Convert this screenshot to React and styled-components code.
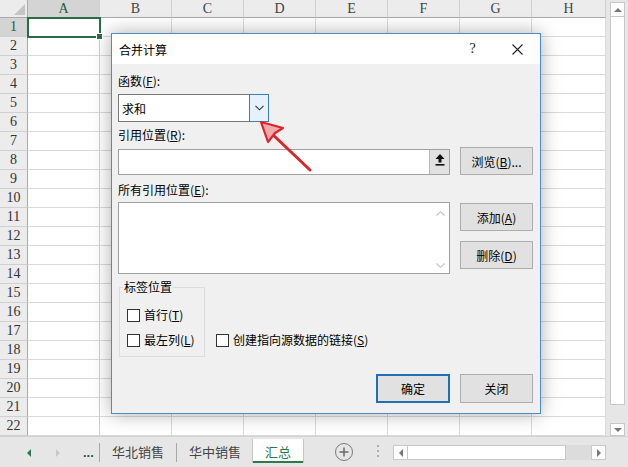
import React from 'react';
import styled, { createGlobalStyle, css } from 'styled-components';

const Global = createGlobalStyle`
  html, body { margin: 0; padding: 0; }
  body {
    width: 628px; height: 467px; overflow: hidden; background: #e6e6e6;
    font-family: "Noto Sans CJK SC", "Noto Sans", sans-serif;
  }
`;

const Screen = styled.div`
  position: relative;
  width: 628px;
  height: 467px;
  display: flex;
  flex-direction: column;
  background: #e6e6e6;
  overflow: hidden;
`;

const Workspace = styled.div`
  display: flex;
  height: 436px;
`;

const Sheet = styled.div`
  display: grid;
  grid-template-columns: 28px repeat(7, 72px) 74px;
  grid-template-rows: 18px repeat(22, 19px);
  width: 606px;
  background: #fff;
  border-right: 1px solid #b5b5b5;
  box-sizing: border-box;
  font-family: "Liberation Serif", "DejaVu Serif", serif;
`;

const Corner = styled.div`
  position: relative;
  background: #ececec;
  border-right: 1px solid #ababab;
  border-bottom: 1px solid #ababab;
  box-sizing: border-box;
  &::after {
    content: "";
    position: absolute;
    right: 2px;
    bottom: 2px;
    border-left: 11px solid transparent;
    border-bottom: 11px solid #c4c4c4;
  }
`;

const ColHead = styled.div`
  display: flex;
  align-items: center;
  justify-content: center;
  background: ${p => (p.$active ? '#d4d4d4' : '#ececec')};
  color: ${p => (p.$active ? '#1f5d36' : '#444')};
  border-right: 1px solid #d0d0d0;
  border-bottom: 1px solid #ababab;
  box-sizing: border-box;
  font-size: 14px;
  line-height: 1;
  padding-top: 1px;
`;

const RowHead = styled.div`
  display: flex;
  align-items: center;
  justify-content: center;
  background: ${p => (p.$active ? '#d4d4d4' : '#ececec')};
  color: ${p => (p.$active ? '#1f5d36' : '#333')};
  border-right: 1px solid #ababab;
  border-bottom: 1px solid #d0d0d0;
  box-sizing: border-box;
  font-size: 14px;
  line-height: 1;
`;

const Cell = styled.div`
  position: relative;
  border-right: 1px solid ${p => (p.$pageBreak ? '#e3c3dc' : '#dadada')};
  border-bottom: 1px solid #dadada;
  box-sizing: border-box;
  ${p =>
    p.$selected &&
    css`
      z-index: 1;
      outline: 2px solid #2a6a44;
      outline-offset: -1px;
      &::after {
        content: "";
        position: absolute;
        right: -4px;
        bottom: -4px;
        width: 5px;
        height: 5px;
        background: #2a6a44;
        border: 1px solid #fff;
      }
    `}
`;

const VScroll = styled.div`
  display: flex;
  flex-direction: column;
  width: 22px;
  padding: 2px 4px 0 4px;
  box-sizing: border-box;
`;

const ArrowBox = styled.div`
  width: 15px;
  height: ${p => p.$h || 15}px;
  box-sizing: border-box;
  border: 1px solid #c8c8c8;
  background: #fdfdfd;
  display: flex;
  align-items: center;
  justify-content: center;
  flex-shrink: 0;
  &::before {
    content: "";
    width: 0;
    height: 0;
    ${p =>
      p.$dir === 'up' &&
      css`
        border-left: 4px solid transparent;
        border-right: 4px solid transparent;
        border-bottom: 4px solid #777;
      `}
    ${p =>
      p.$dir === 'down' &&
      css`
        border-left: 4px solid transparent;
        border-right: 4px solid transparent;
        border-top: 4px solid #777;
      `}
    ${p =>
      p.$dir === 'left' &&
      css`
        border-top: 4px solid transparent;
        border-bottom: 4px solid transparent;
        border-right: 4px solid #777;
      `}
    ${p =>
      p.$dir === 'right' &&
      css`
        border-top: 4px solid transparent;
        border-bottom: 4px solid transparent;
        border-left: 4px solid #777;
      `}
  }
`;

const VThumb = styled.div`
  width: 15px;
  height: 388px;
  box-sizing: border-box;
  background: #fff;
  border: 1px solid #c8c8c8;
  border-top: none;
`;

const VTrack = styled.div`
  flex: 1;
`;

const TabBar = styled.div`
  display: flex;
  align-items: flex-start;
  height: 31px;
  background: #e6e6e6;
  border-top: 1px solid #d2d2d2;
  box-sizing: border-box;
  padding-left: 27px;
  font-size: 13px;
`;

const NavArrow = styled.div`
  width: 0;
  height: 0;
  margin-top: 12px;
  margin-right: ${p => p.$gap}px;
  border-top: 4px solid transparent;
  border-bottom: 4px solid transparent;
  ${p =>
    p.$dir === 'left'
      ? css`border-right: 4px solid #2f7a4d;`
      : css`border-left: 4px solid #c9c9c9;`}
`;

const Ellipsis = styled.div`
  margin-top: 3px;
  height: 24px;
  display: flex;
  align-items: center;
  width: 16px;
  padding-left: 2px;
  color: #2a5a3e;
  font-weight: bold;
  font-size: 13px;
  font-family: "Liberation Sans", sans-serif;
`;

const TabSep = styled.div`
  width: 1px;
  height: 19px;
  margin-top: 6px;
  background: #a8a8a8;
`;

const SheetTab = styled.div`
  height: 24px;
  margin-top: 2px;
  padding: 0 12px;
  display: flex;
  align-items: center;
  color: ${p => (p.$active ? '#2f7a4d' : '#444')};
  box-sizing: border-box;
  ${p =>
    p.$active &&
    css`
      background: #fff;
      border-bottom: 2px solid #2f7a4d;
      box-shadow: 1px 0 0 #c8c8c8, -1px 0 0 #c8c8c8;
      padding-top: 2px;
    `}
`;

const AddSheet = styled.div`
  width: 16px;
  height: 16px;
  margin: 6px 0 0 32px;
  border: 1.5px solid #7a7a7a;
  border-radius: 50%;
  display: flex;
  align-items: center;
  justify-content: center;
`;

const SplitDots = styled.div`
  margin: 8px 0 0 24px;
  display: flex;
  flex-direction: column;
  gap: 3px;
  & > i {
    width: 2px;
    height: 2px;
    background: #b0b0b0;
    display: block;
  }
`;

const HScroll = styled.div`
  display: flex;
  margin: 8px 0 0 14px;
  width: 213px;
  height: 15px;
`;

const HThumb = styled.div`
  width: 158px;
  height: 15px;
  box-sizing: border-box;
  background: #fff;
  border: 1px solid #c8c8c8;
  border-left: none;
`;

const HTrack = styled.div`
  flex: 1;
  background: #dcdcdc;
`;

/* ---------------- Dialog ---------------- */

const Dialog = styled.div`
  position: absolute;
  left: 111px;
  top: 33px;
  width: 430px;
  height: 381px;
  box-sizing: border-box;
  background: #f0f0f0;
  border: 1px solid #4a8cc6;
  box-shadow: 0 0 18px rgba(0, 0, 0, 0.32);
  display: flex;
  flex-direction: column;
  font-size: 12px;
  color: #000;
`;

const TitleBar = styled.div`
  height: 30px;
  background: #fff;
  display: flex;
  align-items: center;
  padding-left: 7px;
  flex-shrink: 0;
`;

const TitleText = styled.div`
  flex: 1;
  font-size: 12px;
`;

const TitleButton = styled.div`
  width: 45px;
  height: 30px;
  display: flex;
  align-items: center;
  justify-content: center;
  font-size: 14px;
  color: #222;
  font-family: "Liberation Serif", serif;
`;

const Body = styled.div`
  flex: 1;
  padding: 9px 7px 0 6px;
  display: flex;
  flex-direction: column;
`;

const Label = styled.div`
  line-height: 16px;
  margin-top: ${p => p.$mt || 0}px;
  white-space: nowrap;
`;

const Combo = styled.div`
  margin-top: 5px;
  width: 151px;
  height: 28px;
  box-sizing: border-box;
  border: 1px solid #7a7a7a;
  background: #fff;
  display: flex;
`;

const ComboText = styled.div`
  flex: 1;
  padding-left: 3px;
  display: flex;
  align-items: center;
`;

const ComboButton = styled.div`
  width: 18px;
  margin: -1px -1px -1px 0;
  border: 1px solid #3c7fb1;
  background: #e5f1fb;
  display: flex;
  align-items: center;
  justify-content: center;
`;

const Row = styled.div`
  display: flex;
  gap: 10px;
  align-items: flex-start;
  margin-top: ${p => p.$mt || 0}px;
`;

const RefInput = styled.div`
  width: 332px;
  height: 26px;
  margin-top: 2px;
  box-sizing: border-box;
  border: 1px solid #a0a0a0;
  background: #fff;
  display: flex;
  justify-content: flex-end;
`;

const CollapseButton = styled.div`
  width: 20px;
  background: #e1e1e1;
  border-left: 1px solid #b9b9b9;
  display: flex;
  justify-content: center;
  padding-top: 4px;
  box-sizing: border-box;
`;

const Button = styled.div`
  width: ${p => p.$w || 73}px;
  height: ${p => p.$h || 28}px;
  box-sizing: border-box;
  border: ${p => (p.$default ? '2px solid #1f6fb2' : '1px solid #adadad')};
  background: #e1e1e1;
  display: flex;
  align-items: center;
  justify-content: center;
  margin-top: ${p => p.$mt || 0}px;
  white-space: nowrap;
`;

const ListBox = styled.div`
  width: 332px;
  height: 72px;
  box-sizing: border-box;
  border: 1px solid #a0a0a0;
  background: #fff;
  display: flex;
  justify-content: flex-end;
`;

const ListScroll = styled.div`
  width: 17px;
  display: flex;
  flex-direction: column;
  justify-content: space-between;
  align-items: center;
  padding: 8px 0 5px;
`;

const SideButtons = styled.div`
  display: flex;
  flex-direction: column;
  gap: 10px;
  margin-top: 1px;
`;

const OptionsRow = styled.div`
  display: flex;
  align-items: flex-end;
  margin-top: 5px;
`;

const Group = styled.fieldset`
  margin: 0 0 0 1px;
  width: 86px;
  box-sizing: border-box;
  border: 1px solid #dcdcdc;
  padding: 10px 4px 6px 7px;
  display: flex;
  flex-direction: column;
  gap: 5px;
  min-width: 0;
`;

const Legend = styled.legend`
  padding: 0 1px;
  margin-left: -4px;
  line-height: 16px;
  font-size: 12px;
`;

const CheckRow = styled.label`
  display: flex;
  align-items: center;
  gap: 4px;
  height: 20px;
  white-space: nowrap;
  margin: ${p => p.$m || 0};
`;

const CheckText = styled.span`
  line-height: 16px;
`;

const Box = styled.span`
  width: 13px;
  height: 13px;
  box-sizing: border-box;
  border: 1px solid #333;
  background: #fff;
  flex-shrink: 0;
`;

const Footer = styled.div`
  display: flex;
  justify-content: flex-end;
  gap: 10px;
  margin-top: 17px;
`;

const Overlay = styled.svg`
  position: absolute;
  left: 0;
  top: 0;
  pointer-events: none;
`;

const cols = ['A', 'B', 'C', 'D', 'E', 'F', 'G', 'H'];
const rows = Array.from({ length: 22 }, (_, i) => i + 1);

export default function App() {
  return (
    <Screen>
      <Global />
      <Workspace>
        <Sheet>
          <Corner />
          {cols.map(c => (
            <ColHead key={c} $active={c === 'A'}>{c}</ColHead>
          ))}
          {rows.map(r => (
            <React.Fragment key={r}>
              <RowHead $active={r === 1}>{r}</RowHead>
              {cols.map(c => (
                <Cell key={c} $pageBreak={c === 'A'} $selected={r === 1 && c === 'A'} />
              ))}
            </React.Fragment>
          ))}
        </Sheet>
        <VScroll>
          <ArrowBox $dir="up" />
          <VThumb />
          <VTrack />
          <ArrowBox $dir="down" $h={13} />
        </VScroll>
      </Workspace>

      <TabBar>
        <NavArrow $dir="left" $gap={25} />
        <NavArrow $dir="right" $gap={21} />
        <Ellipsis>...</Ellipsis>
        <TabSep />
        <SheetTab>华北销售</SheetTab>
        <TabSep />
        <SheetTab>华中销售</SheetTab>
        <SheetTab $active>汇总</SheetTab>
        <AddSheet>
          <svg width="10" height="10" viewBox="0 0 10 10">
            <path d="M5 0.5V9.5M0.5 5H9.5" stroke="#6a6a6a" strokeWidth="1.5" />
          </svg>
        </AddSheet>
        <SplitDots><i /><i /><i /></SplitDots>
        <HScroll>
          <ArrowBox $dir="left" $h={15} />
          <HThumb />
          <HTrack />
          <ArrowBox $dir="right" $h={15} />
        </HScroll>
      </TabBar>

      <Dialog>
        <TitleBar>
          <TitleText>合并计算</TitleText>
          <TitleButton>?</TitleButton>
          <TitleButton>
            <svg width="11" height="11" viewBox="0 0 11 11">
              <path d="M0.5 0.5L10.5 10.5M10.5 0.5L0.5 10.5" stroke="#222" strokeWidth="1.1" />
            </svg>
          </TitleButton>
        </TitleBar>
        <Body>
          <Label>函数(<u>F</u>):</Label>
          <Combo>
            <ComboText>求和</ComboText>
            <ComboButton>
              <svg width="9" height="6" viewBox="0 0 9 6">
                <path d="M0.5 0.8L4.5 4.8L8.5 0.8" fill="none" stroke="#333" strokeWidth="1.1" />
              </svg>
            </ComboButton>
          </Combo>

          <Label $mt={5}>引用位置(<u>R</u>):</Label>
          <Row $mt={4}>
            <RefInput>
              <CollapseButton>
                <svg width="10" height="12" viewBox="0 0 10 12">
                  <path d="M5 0L9.5 5H6.5V8.5H3.5V5H0.5Z" fill="#111" />
                  <rect x="0.5" y="10" width="9" height="1.6" fill="#111" />
                </svg>
              </CollapseButton>
            </RefInput>
            <Button><span>浏览(<u>B</u>)...</span></Button>
          </Row>

          <Label $mt={7}>所有引用位置(<u>E</u>):</Label>
          <Row $mt={4}>
            <ListBox>
              <ListScroll>
                <svg width="9" height="5" viewBox="0 0 9 5">
                  <path d="M0.5 4.5L4.5 0.7L8.5 4.5" fill="none" stroke="#c2c2c2" strokeWidth="1.1" />
                </svg>
                <svg width="9" height="5" viewBox="0 0 9 5">
                  <path d="M0.5 0.5L4.5 4.3L8.5 0.5" fill="none" stroke="#c2c2c2" strokeWidth="1.1" />
                </svg>
              </ListScroll>
            </ListBox>
            <SideButtons>
              <Button><span>添加(<u>A</u>)</span></Button>
              <Button><span>删除(<u>D</u>)</span></Button>
            </SideButtons>
          </Row>

          <OptionsRow>
            <Group>
              <Legend>标签位置</Legend>
              <CheckRow><Box /><CheckText>首行(<u>T</u>)</CheckText></CheckRow>
              <CheckRow><Box /><CheckText>最左列(<u>L</u>)</CheckText></CheckRow>
            </Group>
            <CheckRow $m="0 0 7px 11px">
              <Box />
              <CheckText>创建指向源数据的链接(<u>S</u>)</CheckText>
            </CheckRow>
          </OptionsRow>

          <Footer>
            <Button $default $w={74} $h={29}>确定</Button>
            <Button $h={29}>关闭</Button>
          </Footer>
        </Body>
      </Dialog>

      <Overlay width="628" height="467" viewBox="0 0 628 467">
        <path d="M270 132L310 170" stroke="#d8262b" strokeWidth="3" strokeLinecap="round" />
        <path
          d="M261 122L283 128L275 133L268 142Z"
          fill="#f2a9aa"
          stroke="#d8262b"
          strokeWidth="2.2"
          strokeLinejoin="round"
        />
      </Overlay>
    </Screen>
  );
}
